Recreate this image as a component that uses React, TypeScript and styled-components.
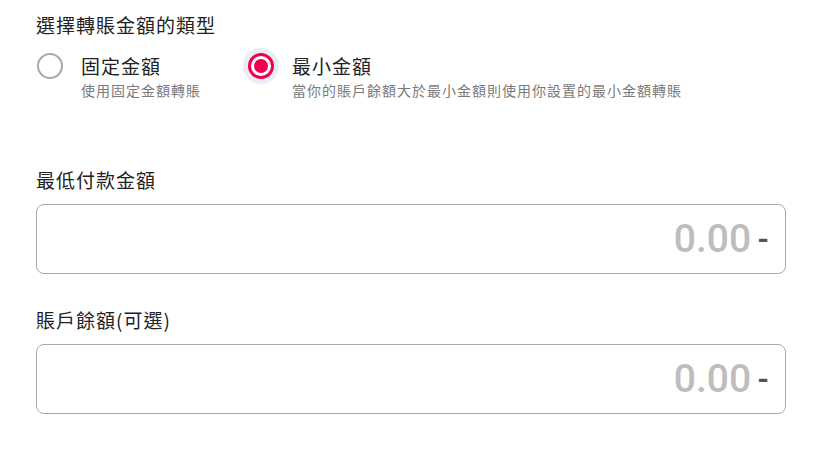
import React from "react";
import styled, { createGlobalStyle } from "styled-components";

const Global = createGlobalStyle`
  html, body { margin: 0; padding: 0; background: #ffffff; }
  body { font-family: "Noto Sans CJK TC", "Noto Sans", sans-serif; color: #222222; }
`;

const Page = styled.div`
  padding: 13px 50px 0 36px;
  display: flex;
  flex-direction: column;
`;

const Heading = styled.div`
  font-size: 19px;
  line-height: 24px;
  letter-spacing: 1px;
  color: #222222;
`;

const OptionRow = styled.div`
  display: flex;
  gap: 46px;
  margin-top: 11px;
`;

const Option = styled.label`
  display: flex;
  align-items: flex-start;
  gap: 13px;
  cursor: pointer;
`;

const RadioBox = styled.span<{ $checked: boolean }>`
  width: 36px;
  height: 36px;
  margin-left: -4px;
  border-radius: 50%;
  flex: none;
  display: flex;
  align-items: center;
  justify-content: center;
  background: ${(p) => (p.$checked ? "#ececf4" : "transparent")};
`;

const RadioCircle = styled.span<{ $checked: boolean }>`
  box-sizing: border-box;
  width: 26px;
  height: 26px;
  border-radius: 50%;
  border: ${(p) => (p.$checked ? "3px solid #f2004f" : "2px solid #a9a9a9")};
  background: #ffffff;
  display: flex;
  align-items: center;
  justify-content: center;
`;

const RadioDot = styled.span`
  width: 14px;
  height: 14px;
  border-radius: 50%;
  background: #f2004f;
`;

const OptionText = styled.span`
  display: flex;
  flex-direction: column;
  padding-top: 6px;
`;

const OptionTitle = styled.span`
  font-size: 19px;
  line-height: 24px;
  letter-spacing: 1px;
  color: #222222;
`;

const OptionDesc = styled.span`
  font-size: 14px;
  line-height: 20px;
  letter-spacing: 1px;
  margin-top: 2px;
  color: #7a7a7a;
`;

const Field = styled.div<{ $top: number }>`
  display: flex;
  flex-direction: column;
  margin-top: ${(p) => p.$top}px;
`;

const FieldLabel = styled.div`
  font-size: 19px;
  line-height: 24px;
  letter-spacing: 1px;
  color: #222222;
  margin-bottom: 12px;
`;

const InputBox = styled.div`
  box-sizing: border-box;
  height: 70px;
  border: 1px solid #a9a9a9;
  border-radius: 8px;
  display: flex;
  align-items: center;
  justify-content: flex-end;
  padding: 0 16px 0 16px;
`;

const Amount = styled.span`
  font-family: Roboto, "Liberation Sans", sans-serif;
  font-size: 39px;
  font-weight: 500;
  color: #bdbdbd;
  line-height: 1;
`;

const Sign = styled.span`
  font-family: Roboto, "Liberation Sans", sans-serif;
  font-size: 30px;
  font-weight: 700;
  color: #555555;
  margin-left: 6px;
  line-height: 1;
`;

function Radio({ checked, title, desc }: { checked: boolean; title: string; desc: string }) {
  return (
    <Option>
      <RadioBox $checked={checked}>
        <RadioCircle $checked={checked}>{checked && <RadioDot />}</RadioCircle>
      </RadioBox>
      <OptionText>
        <OptionTitle>{title}</OptionTitle>
        <OptionDesc>{desc}</OptionDesc>
      </OptionText>
    </Option>
  );
}

function AmountField({ label, top }: { label: string; top: number }) {
  return (
    <Field $top={top}>
      <FieldLabel>{label}</FieldLabel>
      <InputBox>
        <Amount>0.00</Amount>
        <Sign>-</Sign>
      </InputBox>
    </Field>
  );
}

export default function App() {
  return (
    <>
      <Global />
      <Page>
        <Heading>選擇轉賬金額的類型</Heading>
        <OptionRow>
          <Radio checked={false} title="固定金額" desc="使用固定金額轉賬" />
          <Radio checked={true} title="最小金額" desc="當你的賬戶餘額大於最小金額則使用你設置的最小金額轉賬" />
        </OptionRow>
        <AmountField label="最低付款金額" top={68} />
        <AmountField label="賬戶餘額(可選)" top={34} />
      </Page>
    </>
  );
}
